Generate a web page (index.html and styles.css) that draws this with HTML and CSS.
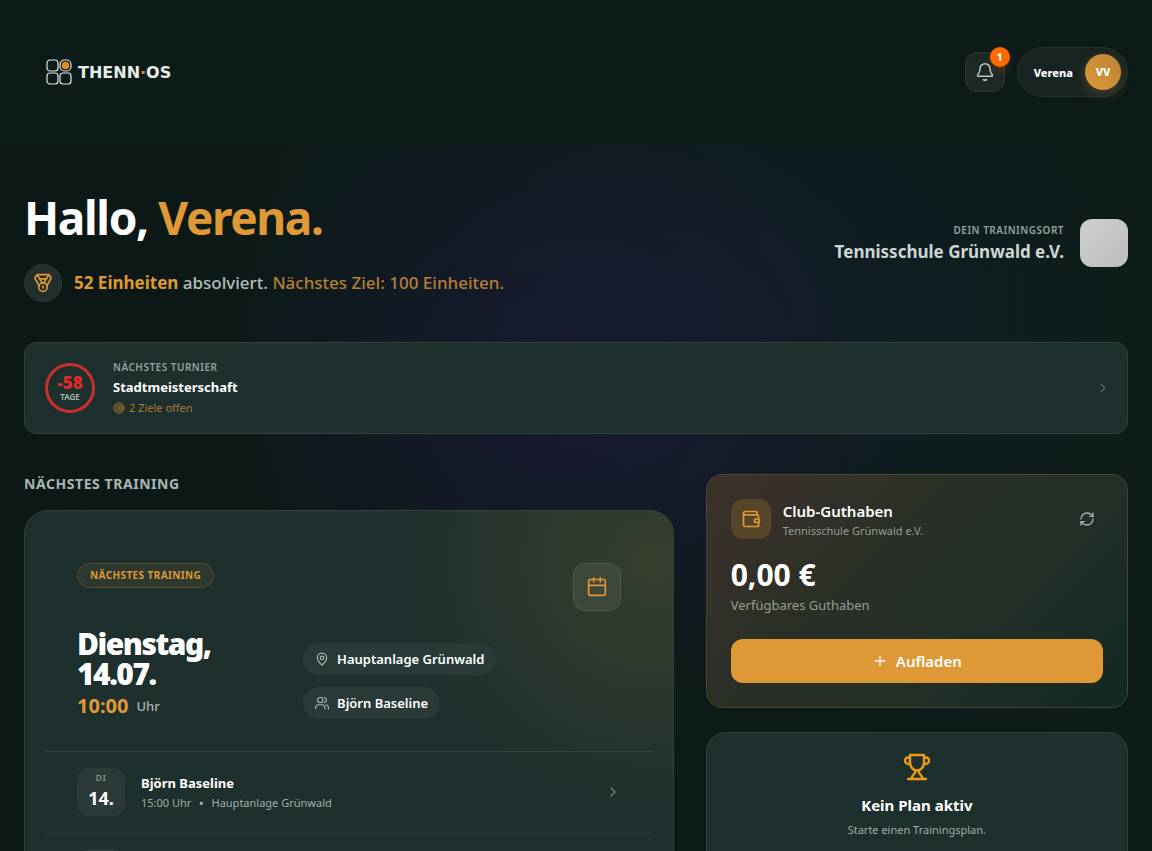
FILE: index.html
```
<!DOCTYPE html>
<html lang="de">
<head>
    <meta charset="UTF-8">
    <meta name="viewport" content="width=device-width, initial-scale=1.0">
    <title>THENN·OS</title>
    <link rel="stylesheet" href="styles.css">
</head>
<body>
    <header class="topbar">
        <a class="logo" href="#">
            <svg width="26" height="26" viewBox="0 0 26 26" fill="none" stroke="#dfe8e6" stroke-width="1.2"><rect x="1" y="1" width="11" height="11" rx="3"/><rect x="14" y="1" width="11" height="11" rx="4.5"/><rect x="1" y="14" width="11" height="11" rx="3"/><rect x="14" y="14" width="11" height="11" rx="3"/><circle cx="19.5" cy="6.5" r="3.8" fill="#e08f22" stroke="none"/></svg>
            <span>THENN<i>·</i>OS</span>
        </a>
        <div class="topbar-actions">
            <button class="bell" aria-label="Benachrichtigungen">
                <svg class="icon" width="20" height="20" viewBox="0 0 24 24"><path d="M10.27 21a2 2 0 0 0 3.46 0"/><path d="M3.26 15.33A1 1 0 0 0 4 17h16a1 1 0 0 0 .74-1.67C19.41 13.96 18 12.5 18 8A6 6 0 0 0 6 8c0 4.5-1.41 5.96-2.74 7.33"/></svg>
                <span class="bell-count">1</span>
            </button>
            <button class="user">
                <span>Verena</span>
                <span class="avatar">VV</span>
            </button>
        </div>
    </header>

    <main>
        <section class="hero">
            <div>
                <h1>Hallo, <em>Verena.</em></h1>
                <div class="progress">
                    <span class="medal">
                        <svg class="icon" width="20" height="20" viewBox="0 0 24 24"><path d="M7.21 15 2.66 7.14a2 2 0 0 1 .13-2.2L4.4 2.8A2 2 0 0 1 6 2h12a2 2 0 0 1 1.6.8l1.6 2.14a2 2 0 0 1 .14 2.2L16.79 15"/><path d="M11 12 5.12 2.2"/><path d="m13 12 5.88-9.8"/><path d="M8 7h8"/><circle cx="12" cy="17" r="5"/><path d="M12 18v-2h-.5"/></svg>
                    </span>
                    <p><strong>52 Einheiten</strong> absolviert. <span class="goal">Nächstes Ziel: 100 Einheiten.</span></p>
                </div>
            </div>
            <div class="club">
                <div>
                    <p class="label">Dein Trainingsort</p>
                    <p class="club-name">Tennisschule Grünwald e.V.</p>
                </div>
                <div class="club-logo"></div>
            </div>
        </section>

        <a class="card tournament" href="#">
            <div class="ring">
                <strong>-58</strong>
                <span>TAGE</span>
            </div>
            <div class="tournament-info">
                <p class="label">Nächstes Turnier</p>
                <h2>Stadtmeisterschaft</h2>
                <p class="targets">
                    <svg class="icon" width="12" height="12" viewBox="0 0 24 24"><circle cx="12" cy="12" r="10"/><circle cx="12" cy="12" r="6"/><circle cx="12" cy="12" r="2"/></svg>
                    2 Ziele offen
                </p>
            </div>
            <svg class="icon chevron" width="16" height="16" viewBox="0 0 24 24"><path d="m9 18 6-6-6-6"/></svg>
        </a>

        <div class="columns">
            <section>
                <h2 class="section-title">Nächstes Training</h2>
                <div class="card training">
                    <div class="training-main">
                        <div class="training-head">
                            <span class="tag">Nächstes Training</span>
                            <span class="calendar">
                                <svg class="icon" width="20" height="20" viewBox="0 0 24 24"><path d="M8 1v5M16 1v5M2 10h20"/><rect x="2" y="3" width="20" height="19" rx="2"/></svg>
                            </span>
                        </div>
                        <div class="training-body">
                            <div>
                                <h3>Dienstag, 14.07.</h3>
                                <p class="time"><strong>10:00</strong> Uhr</p>
                            </div>
                            <div class="pills">
                                <span class="pill">
                                    <svg class="icon" width="14" height="14" viewBox="0 0 24 24"><path d="M20 10c0 5-5.54 10.2-7.4 11.8a1 1 0 0 1-1.2 0C9.54 20.2 4 15 4 10a8 8 0 0 1 16 0"/><circle cx="12" cy="10" r="3"/></svg>
                                    Hauptanlage Grünwald
                                </span>
                                <span class="pill">
                                    <svg class="icon" width="14" height="14" viewBox="0 0 24 24"><path d="M1 22v-2a5 5 0 0 1 5-5h6a5 5 0 0 1 5 5v2"/><circle cx="9" cy="7" r="4.5"/><path d="M23 22v-2a5 5 0 0 0-4-5"/><path d="M16 2.5a4.6 4.6 0 0 1 0 9"/></svg>
                                    Björn Baseline
                                </span>
                            </div>
                        </div>
                    </div>
                    <a class="session" href="#">
                        <div class="day"><span>DI</span><strong>14.</strong></div>
                        <div class="session-info">
                            <h4>Björn Baseline</h4>
                            <p>15:00 Uhr<b>•</b>Hauptanlage Grünwald</p>
                        </div>
                        <svg class="icon chevron" width="16" height="16" viewBox="0 0 24 24"><path d="m9 18 6-6-6-6"/></svg>
                    </a>
                    <div class="session">
                        <div class="day"></div>
                    </div>
                </div>
            </section>

            <aside>
                <section class="card balance">
                    <div class="balance-head">
                        <span class="wallet">
                            <svg class="icon" width="20" height="20" viewBox="0 0 24 24"><path d="M19 7V4a1 1 0 0 0-1-1H5a2 2 0 0 0 0 4h15a1 1 0 0 1 1 1v4h-3a2 2 0 0 0 0 4h3a1 1 0 0 0 1-1v-2a1 1 0 0 0-1-1"/><path d="M3 5v14a2 2 0 0 0 2 2h15a1 1 0 0 0 1-1v-4"/></svg>
                        </span>
                        <div>
                            <h2>Club-Guthaben</h2>
                            <p>Tennisschule Grünwald e.V.</p>
                        </div>
                        <button class="refresh" aria-label="Aktualisieren">
                            <svg class="icon" width="16" height="16" viewBox="0 0 24 24"><path d="M3 12a9 9 0 0 1 9-9 9.75 9.75 0 0 1 6.74 2.74L21 8"/><path d="M21 3v5h-5"/><path d="M21 12a9 9 0 0 1-9 9 9.75 9.75 0 0 1-6.74-2.74L3 16"/><path d="M8 16H3v5"/></svg>
                        </button>
                    </div>
                    <p class="amount">0,00 €</p>
                    <p class="amount-label">Verfügbares Guthaben</p>
                    <button class="btn-primary">
                        <svg class="icon" width="16" height="16" viewBox="0 0 24 24"><path d="M5 12h14M12 5v14"/></svg>
                        Aufladen
                    </button>
                </section>

                <section class="card plan">
                    <svg class="icon" width="28" height="28" viewBox="0 0 28 28"><path d="M7 2h14v7c0 5-3 8.5-7 8.5S7 14 7 9z"/><path d="M7 4.5H5a3 3 0 0 0-3 3A3.5 3.500 0 0 0 5.500 11H7"/><path d="M21 4.500h2a3 3 0 0 1 3 3 3.500 3.500 0 0 1-3.500 3.500H21"/><path d="M12.500 17.500c0 4-4 4.500-4 8.500"/><path d="M15.500 17.500c0 4 4 4.500 4 8.500"/><path d="M5 26h18"/></svg>
                    <h2>Kein Plan aktiv</h2>
                    <p>Starte einen Trainingsplan.</p>
                </section>
            </aside>
        </div>
    </main>
</body>
</html>
```
FILE: styles.css
```
:root {
    --accent: #df9836;
    --bg: #0c1a17;
    --card: #1e302d;
    --line: #30413d;
    --muted: #a0adaa;
}
* { box-sizing: border-box; margin: 0; padding: 0; }
body {
    font-family: 'Noto Sans', 'Segoe UI', sans-serif;
    background:
        radial-gradient(ellipse 340px 320px at 570px 400px, rgba(30, 22, 58, 0.6), rgba(30, 22, 58, 0) 100%),
        radial-gradient(ellipse 460px 340px at 680px 310px, rgba(18, 32, 52, 0.55), rgba(18, 32, 52, 0) 100%),
        linear-gradient(90deg, #0b1816, #0e1d1a) var(--bg);
    color: #fff;
    min-height: 100vh;
}
a { color: inherit; text-decoration: none; }
button { font: inherit; color: inherit; border: none; background: none; cursor: pointer; }
.icon { fill: none; stroke: currentColor; stroke-width: 2; stroke-linecap: round; stroke-linejoin: round; flex: none; }
.card { background: var(--card); border: 1px solid var(--line); border-radius: 16px; }
.label { font-size: 10px; line-height: 18px; font-weight: 600; letter-spacing: 0.05em; text-transform: uppercase; color: #93a29e; }

/* Header */
.topbar {
    display: flex; align-items: center; justify-content: space-between;
    height: 144px; padding: 0 24px 0 46px; background: #0c1a18;
}
.logo { display: flex; align-items: center; gap: 6px; font-family: 'DejaVu Sans', sans-serif; font-weight: 700; font-size: 16px; color: #e6edeb; }
.logo i { font-style: normal; color: #e08f22; }
.topbar-actions { display: flex; align-items: center; gap: 12px; }
.bell {
    position: relative; width: 40px; height: 40px; border-radius: 12px; color: #c0c8c6;
    background: #1d2927; border: 1px solid #2d3936; display: flex; align-items: center; justify-content: center;
}
.bell .icon { stroke-width: 1.8; }
.bell-count {
    position: absolute; top: -6px; right: -6px; width: 20px; height: 20px; border-radius: 50%;
    background: #ff6900; color: #fff; font-size: 11px; line-height: 20px; font-weight: 700; text-align: center;
    box-shadow: 0 4px 10px rgba(255, 105, 0, 0.2);
}
.user {
    display: flex; align-items: center; gap: 12px; height: 50px; padding: 0 6px 0 16px; border-radius: 25px;
    background: #172422; border: 1px solid #24312e; font-size: 11px; font-weight: 800;
}
.avatar {
    width: 36px; height: 36px; border-radius: 50%; background: linear-gradient(45deg, #df9836, #b98236);
    line-height: 36px; box-shadow: 0 4px 14px rgba(223, 152, 54, 0.25);
}

main { padding: 48px 24px; }

/* Greeting */
.hero { display: flex; align-items: center; justify-content: space-between; margin-bottom: 40px; }
h1 { font-size: 46px; line-height: 50px; letter-spacing: -0.03em; margin-bottom: 22px; }
h1 em { font-style: normal; color: var(--accent); }
.progress { display: flex; align-items: center; gap: 12px; font-size: 17px; line-height: 28px; font-weight: 500; color: #b0bfbb; }
.progress strong { color: var(--accent); }
.goal { color: #b57f36; }
.medal {
    width: 38px; height: 38px; border-radius: 50%; background: #222f2c; border: 1px solid #2c3936;
    color: var(--accent); display: flex; align-items: center; justify-content: center;
}
.club { display: flex; align-items: center; gap: 16px; padding-bottom: 8px; text-align: right; }
.club-name { font-size: 17px; line-height: 26px; font-weight: 700; color: #ced6d4; }
.club-logo { width: 48px; height: 48px; border-radius: 12px; background: linear-gradient(135deg, #cdcfce, #bdbfbe); }

/* Tournament */
.tournament { display: flex; align-items: center; gap: 18px; padding: 15px 16px 15px 20px; margin-bottom: 40px; border-radius: 12px; }
.ring {
    width: 50px; height: 50px; border: 3px solid #c92f2f; border-radius: 50%; text-align: center;
    display: flex; flex-direction: column; justify-content: center;
}
.ring strong { font-size: 17px; line-height: 18px; font-weight: 900; color: #dc2b2b; }
.ring span { font-size: 8px; line-height: 10px; font-weight: 600; color: #b0bfbb; }
.tournament-info { flex: 1; }
.tournament-info h2 { font-size: 13px; line-height: 22px; }
.targets { display: flex; align-items: center; gap: 4px; font-size: 11px; line-height: 20px; color: #a67a33; }
.chevron { color: #6f7f7b; }
.tournament .chevron { color: #53635f; }

/* Training */
.columns { display: grid; grid-template-columns: 20fr 13fr; gap: 32px; align-items: start; }
.section-title { font-size: 14px; line-height: 20px; letter-spacing: 0.04em; text-transform: uppercase; color: #a9b7b4; margin-bottom: 16px; }
.training {
    border-radius: 24px; padding: 20px;
    background: radial-gradient(circle 240px at 97% 50px, #363e2d, rgba(54, 62, 45, 0.6) 45%, rgba(30, 48, 45, 0)) var(--card);
}
.training-main { padding: 32px; }
.training-head { display: flex; align-items: flex-start; justify-content: space-between; margin-bottom: 18px; }
.tag {
    padding: 0 12px; border: 1px solid #5b4a2b; border-radius: 13px; background: #2d392e;
    font-size: 10px; line-height: 23px; font-weight: 700; letter-spacing: 0.04em; text-transform: uppercase; color: var(--accent);
}
.calendar {
    width: 48px; height: 48px; border-radius: 12px; background: #3d473a; border: 1px solid #505a4b;
    color: var(--accent); display: flex; align-items: center; justify-content: center;
}
.training-body { display: grid; grid-template-columns: 7fr 11fr; gap: 24px; align-items: end; }
h3 { font-size: 30px; line-height: 30px; font-weight: 900; letter-spacing: -0.05em; max-width: 160px; margin-bottom: 4px; }
.time { display: flex; align-items: center; gap: 8px; font-size: 13px; line-height: 26px; font-weight: 500; color: #a9b7b4; }
.time strong { font-size: 20px; color: var(--accent); }
.pills { display: flex; flex-direction: column; align-items: flex-start; gap: 12px; }
.pill {
    display: flex; align-items: center; gap: 8px; padding: 0 12px; border-radius: 16px; background: #293a38;
    font-size: 13px; line-height: 32px; font-weight: 600;
}
.pill .icon { color: #a9b7b4; }
.session { display: flex; align-items: center; gap: 16px; padding: 16px 32px; border-top: 1px solid #34453f; }
.session + .session { border-top-color: #273835; }
.day { width: 48px; height: 48px; border-radius: 12px; background: #2b3a38; text-align: center; display: flex; flex-direction: column; }
.day span { font-size: 9px; line-height: 20px; font-weight: 600; letter-spacing: 0.05em; color: #84928f; }
.day strong { font-size: 18px; line-height: 20px; }
.session-info { flex: 1; padding-top: 2px; }
h4 { font-size: 13px; line-height: 20px; }
.session-info p { font-size: 11px; line-height: 20px; color: #a0adaa; }
.session-info b { margin: 0 8px; }

/* Balance */
.balance {
    padding: 24px; margin-bottom: 24px; border-color: #4b4628;
    background: linear-gradient(135deg, #3e302b, #2b3027 35%, #222f27 65%, #102824);
}
.balance-head { display: flex; align-items: center; gap: 12px; margin-bottom: 18px; }
.wallet {
    width: 40px; height: 40px; border-radius: 12px; background: #57452a; color: var(--accent);
    display: flex; align-items: center; justify-content: center;
}
.balance-head div { flex: 1; }
.balance-head h2 { font-size: 15px; line-height: 24px; font-weight: 600; }
.balance-head p { font-size: 11px; line-height: 16px; color: #969d99; }
.refresh { width: 32px; height: 32px; color: #a9b0b4; display: flex; align-items: center; justify-content: center; }
.amount { font-size: 30px; line-height: 36px; font-weight: 700; margin-bottom: 2px; }
.amount-label { font-size: 13px; line-height: 20px; color: #969d99; margin-bottom: 24px; }
.btn-primary {
    width: 100%; height: 44px; border-radius: 12px; background: var(--accent); font-size: 15px; font-weight: 600;
    display: flex; align-items: center; justify-content: center; gap: 8px;
}

/* Plan */
.plan { border-radius: 20px; padding: 20px 20px 40px; text-align: center; }
.plan .icon { display: block; margin: 0 auto 14px; color: #ee9a14; stroke-width: 2.4; }
.plan h2 { font-size: 15px; line-height: 20px; margin-bottom: 5px; }
.plan p { font-size: 11px; line-height: 20px; color: var(--muted); }
```
